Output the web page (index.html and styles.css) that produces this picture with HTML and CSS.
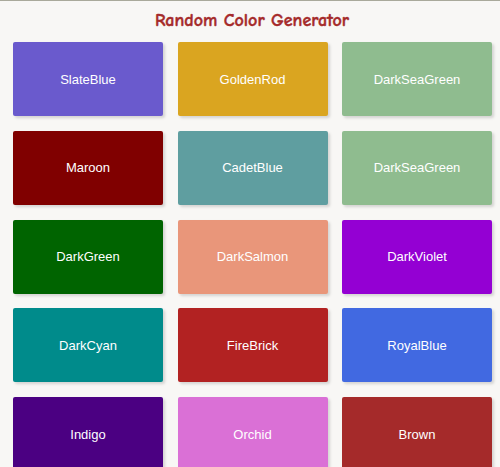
FILE: index.html
```html
<!DOCTYPE html>
<html>
<head>
<meta charset="utf-8">
<link rel="stylesheet" href="styles.css">
</head>
<body>
<h1 class="title">Random Color Generator</h1>
<div class="grid">
  <div class="card" style="background: slateblue">SlateBlue</div>
  <div class="card" style="background: goldenrod">GoldenRod</div>
  <div class="card" style="background: darkseagreen">DarkSeaGreen</div>
  <div class="card" style="background: maroon">Maroon</div>
  <div class="card" style="background: cadetblue">CadetBlue</div>
  <div class="card" style="background: darkseagreen">DarkSeaGreen</div>
  <div class="card" style="background: darkgreen">DarkGreen</div>
  <div class="card" style="background: darksalmon">DarkSalmon</div>
  <div class="card" style="background: darkviolet">DarkViolet</div>
  <div class="card" style="background: darkcyan">DarkCyan</div>
  <div class="card" style="background: firebrick">FireBrick</div>
  <div class="card" style="background: royalblue">RoyalBlue</div>
  <div class="card" style="background: indigo">Indigo</div>
  <div class="card" style="background: orchid">Orchid</div>
  <div class="card" style="background: brown">Brown</div>
</div>
</body>
</html>
```
FILE: styles.css
```css
html, body {
  margin: 0;
  padding: 0;
  background: #f8f7f5;
}
body {
  border-top: 1px solid #a9a99b;
  font-family: "Liberation Sans", Arial, sans-serif;
}
.title {
  margin: 0;
  padding-top: 9px;
  height: 33px;
  box-sizing: border-box;
  text-align: center;
  font-family: "Comic Sans MS", "Comic Neue", "DejaVu Sans", sans-serif;
  font-size: 18px;
  font-weight: bold;
  -webkit-text-stroke: 0.4px #a52a2a;
  color: #a52a2a;
  line-height: 22px;
  padding-left: 4px;
}
.grid {
  margin: 8px 0 0 13px;
  width: 479px;
  display: grid;
  grid-template-columns: repeat(3, 1fr);
  column-gap: 14.5px;
  row-gap: 14.75px;
}
.card {
  height: 74px;
  border-radius: 2px;
  box-shadow: 2px 2px 3px rgba(0, 0, 0, 0.15);
  color: #fff;
  font-size: 13px;
  display: flex;
  align-items: center;
  justify-content: center;
}
```
